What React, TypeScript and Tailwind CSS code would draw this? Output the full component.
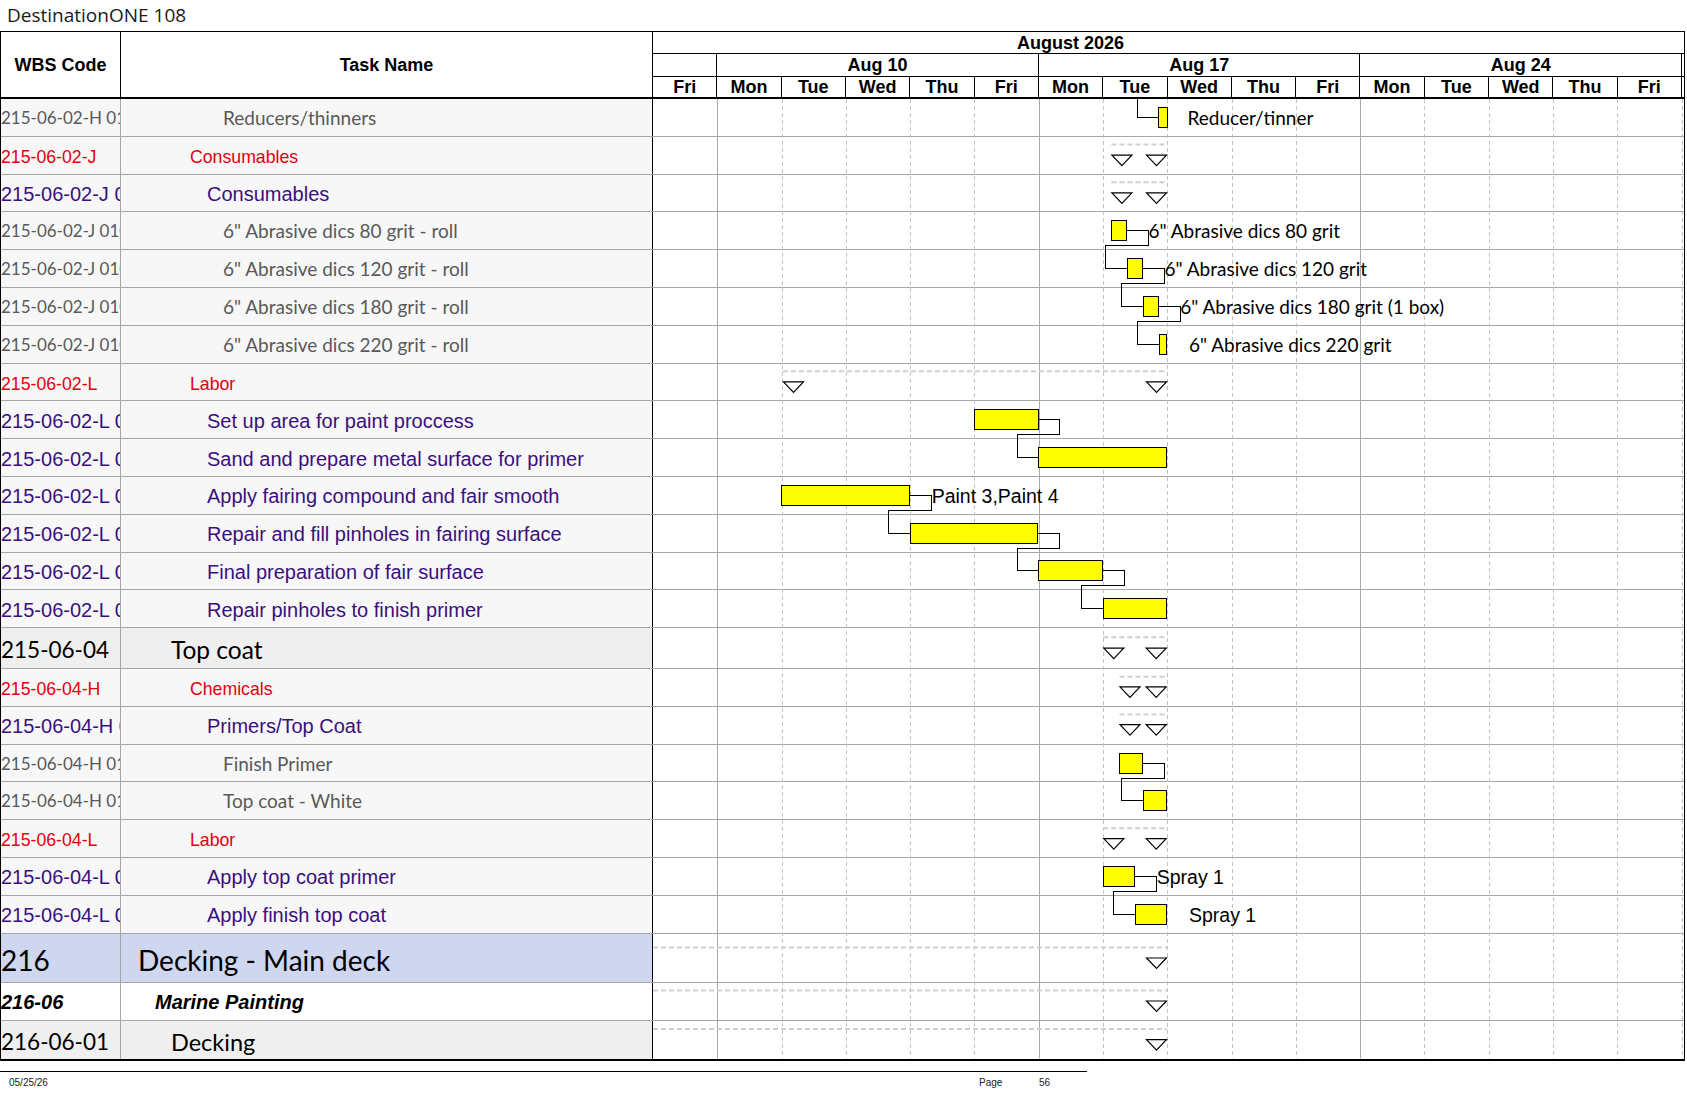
import React from 'react';

type Kind = 'grey' | 'red' | 'purple' | 'top' | 'main' | 'marine' | 'deck';

interface Row {
  wbs: string;
  name: string;
  kind: Kind;
}

const rows: Row[] = [
  { wbs: '215-06-02-H 0101', name: 'Reducers/thinners', kind: 'grey' },
  { wbs: '215-06-02-J', name: 'Consumables', kind: 'red' },
  { wbs: '215-06-02-J 01', name: 'Consumables', kind: 'purple' },
  { wbs: '215-06-02-J 0101', name: '6" Abrasive dics 80 grit - roll', kind: 'grey' },
  { wbs: '215-06-02-J 0102', name: '6" Abrasive dics 120 grit - roll', kind: 'grey' },
  { wbs: '215-06-02-J 0103', name: '6" Abrasive dics 180 grit - roll', kind: 'grey' },
  { wbs: '215-06-02-J 0104', name: '6" Abrasive dics 220 grit - roll', kind: 'grey' },
  { wbs: '215-06-02-L', name: 'Labor', kind: 'red' },
  { wbs: '215-06-02-L 01', name: 'Set up area for paint proccess', kind: 'purple' },
  { wbs: '215-06-02-L 02', name: 'Sand and prepare metal surface for primer', kind: 'purple' },
  { wbs: '215-06-02-L 03', name: 'Apply fairing compound and fair smooth', kind: 'purple' },
  { wbs: '215-06-02-L 04', name: 'Repair and fill pinholes in fairing surface', kind: 'purple' },
  { wbs: '215-06-02-L 05', name: 'Final preparation of fair surface', kind: 'purple' },
  { wbs: '215-06-02-L 06', name: 'Repair pinholes to finish primer', kind: 'purple' },
  { wbs: '215-06-04', name: 'Top coat', kind: 'top' },
  { wbs: '215-06-04-H', name: 'Chemicals', kind: 'red' },
  { wbs: '215-06-04-H 01', name: 'Primers/Top Coat', kind: 'purple' },
  { wbs: '215-06-04-H 0101', name: 'Finish Primer', kind: 'grey' },
  { wbs: '215-06-04-H 0102', name: 'Top coat - White', kind: 'grey' },
  { wbs: '215-06-04-L', name: 'Labor', kind: 'red' },
  { wbs: '215-06-04-L 01', name: 'Apply top coat primer', kind: 'purple' },
  { wbs: '215-06-04-L 02', name: 'Apply finish top coat', kind: 'purple' },
  { wbs: '216', name: 'Decking - Main deck', kind: 'main' },
  { wbs: '216-06', name: 'Marine Painting', kind: 'marine' },
  { wbs: '216-06-01', name: 'Decking', kind: 'deck' },
];

interface KindStyle {
  h: number;
  row: string;
  shift: string;
  bg: string;
  wtext: string;
  text: string;
  pad: string;
}

const kindStyle: Record<Kind, KindStyle> = {
  grey: {
    h: 37.8,
    row: 'h-[37.8px]',
    shift: 'pt-0',
    bg: 'bg-[#f7f7f7]',
    wtext: "font-['Lato',sans-serif] text-[17px] text-[#595959]",
    text: "font-['Lato',sans-serif] text-[19px] text-[#595959]",
    pad: 'pl-[102px]',
  },
  red: {
    h: 37.8,
    row: 'h-[37.8px]',
    shift: 'pt-[5px]',
    bg: 'bg-[#f7f7f7]',
    wtext: "font-['Liberation_Sans',Arial,sans-serif] text-[17.7px] text-[#e3000f]",
    text: "font-['Liberation_Sans',Arial,sans-serif] text-[17.7px] text-[#e3000f]",
    pad: 'pl-[69px]',
  },
  purple: {
    h: 37.8,
    row: 'h-[37.8px]',
    shift: 'pt-[2px]',
    bg: 'bg-[#f7f7f7]',
    wtext: "font-['Liberation_Sans',Arial,sans-serif] text-[20px] text-[#3b0f80]",
    text: "font-['Liberation_Sans',Arial,sans-serif] text-[20px] text-[#3b0f80]",
    pad: 'pl-[86px]',
  },
  top: {
    h: 40.9,
    row: 'h-[40.9px]',
    shift: 'pt-[4px]',
    bg: 'bg-[#efefef]',
    wtext: "font-['Lato',sans-serif] text-[22.5px] text-black",
    text: "font-['Lato',sans-serif] text-[24.5px] text-black",
    pad: 'pl-[50px]',
  },
  main: {
    h: 49.5,
    row: 'h-[49.5px]',
    shift: 'pt-[4px]',
    bg: 'bg-[#cfd6ef]',
    wtext: "font-['Lato',sans-serif] text-[28px] text-black",
    text: "font-['Lato',sans-serif] text-[28px] text-black",
    pad: 'pl-[17px]',
  },
  marine: {
    h: 37.5,
    row: 'h-[37.5px]',
    shift: 'pt-[2px]',
    bg: 'bg-white',
    wtext: "font-['Liberation_Sans',Arial,sans-serif] text-[20px] font-bold italic text-black",
    text: "font-['Liberation_Sans',Arial,sans-serif] text-[20px] font-bold italic text-black",
    pad: 'pl-[34px]',
  },
  deck: {
    h: 38,
    row: 'h-[38px]',
    shift: 'pt-[6px]',
    bg: 'bg-[#efefef]',
    wtext: "font-['Lato',sans-serif] text-[22.5px] text-black",
    text: "font-['Lato',sans-serif] text-[23.5px] text-black",
    pad: 'pl-[50px]',
  },
};

const days = ['Fri', 'Mon', 'Tue', 'Wed', 'Thu', 'Fri', 'Mon', 'Tue', 'Wed', 'Thu', 'Fri', 'Mon', 'Tue', 'Wed', 'Thu', 'Fri'];

// row tops in page coordinates, used by the chart overlay
const tops: number[] = [];
{
  let y = 99;
  rows.forEach((r) => {
    tops.push(y);
    y += kindStyle[r.kind].h;
  });
  tops.push(y);
}

const DAY = 64.29;
const X0 = 653;

const bars: [number, number, number][] = [
  [1158.8, 1167.5, 0],
  [1111.7, 1126.3, 3],
  [1127.3, 1142.3, 4],
  [1143.3, 1158.7, 5],
  [1159.3, 1166.7, 6],
  [974, 1038, 8],
  [1038, 1166.7, 9],
  [781.3, 909.3, 10],
  [910.7, 1037.7, 11],
  [1038, 1102.3, 12],
  [1103.3, 1166.7, 13],
  [1119.3, 1142.7, 17],
  [1143.3, 1166.7, 18],
  [1103.3, 1134.3, 20],
  [1135.3, 1166.7, 21],
];

// from, out, back, to, row of predecessor
const links: [number, number, number, number, number][] = [
  [1126.3, 1148.3, 1105, 1127.3, 3],
  [1142.3, 1164.3, 1121, 1143.3, 4],
  [1158.7, 1180, 1137.3, 1159.3, 5],
  [1038, 1059.3, 1017.3, 1038, 8],
  [909.3, 931.7, 888.3, 910.7, 10],
  [1037.7, 1059.3, 1017.3, 1038, 11],
  [1102.3, 1124.3, 1081.7, 1103.3, 12],
  [1142.7, 1164.7, 1121.3, 1143.3, 17],
  [1134.3, 1156.7, 1113.3, 1135.3, 20],
];

// x0, x1, row, dash offset, triangle offset, left triangle
const summaries: [number, number, number, number, number, boolean][] = [
  [1111.4, 1167, 1, 7.6, 18.3, true],
  [1111.4, 1167, 2, 7.6, 18.3, true],
  [783, 1167, 7, 7.6, 18.3, true],
  [1103.3, 1166.7, 14, 9, 20, true],
  [1119.5, 1166.7, 15, 7.6, 17.8, true],
  [1119.5, 1166.7, 16, 7.6, 17.8, true],
  [1103.3, 1166.7, 19, 8, 18.3, true],
  [653, 1167, 22, 13.7, 24.3, false],
  [653, 1167, 23, 7.4, 17.8, false],
  [653, 1167, 24, 8.3, 19, false],
];

const labels: [string, number, number, 'cal' | 'arial'][] = [
  ['Reducer/tinner', 1187.5, 0, 'cal'],
  ['6" Abrasive dics 80 grit', 1148.5, 3, 'cal'],
  ['6" Abrasive dics 120 grit', 1164.5, 4, 'cal'],
  ['6" Abrasive dics 180 grit (1 box)', 1180.2, 5, 'cal'],
  ['6" Abrasive dics 220 grit', 1189, 6, 'cal'],
  ['Paint 3,Paint 4', 931.7, 10, 'arial'],
  ['Spray 1', 1156.7, 20, 'arial'],
  ['Spray 1', 1189, 21, 'arial'],
];

const mid = (row: number) => tops[row] + 18.3;

function GanttOverlay() {
  const bottom = tops[tops.length - 1];
  return (
    <svg className="absolute left-[652px] top-0 pointer-events-none" width={1031} height={bottom - 99}>
      <g transform="translate(-653,-99)">
        {Array.from({ length: 16 }, (_, i) => {
          const k = i + 1;
          const x = Math.round(X0 + k * DAY) + 0.5;
          const solid = k === 1 || k === 6 || k === 11;
          return (
            <line
              key={k}
              x1={x}
              x2={x}
              y1={99}
              y2={bottom}
              stroke={solid ? '#a9a9a9' : '#c2c2c2'}
              strokeDasharray={solid ? undefined : '4 3'}
              strokeWidth={1}
            />
          );
        })}

        {summaries.map(([a, b, r, d, t, left], i) => {
          const yd = tops[r] + d;
          const yt = tops[r] + t;
          return (
            <g key={i}>
              <line x1={a} x2={b} y1={yd} y2={yd} stroke="#cfcfcf" strokeWidth={2} strokeDasharray="5 3" />
              {left && (
                <polygon
                  points={`${a + 0.5},${yt} ${a + 20.5},${yt} ${a + 10.5},${yt + 10.5}`}
                  fill="white"
                  stroke="black"
                  strokeWidth={1.2}
                />
              )}
              <polygon
                points={`${b - 20.5},${yt} ${b - 0.5},${yt} ${b - 10.5},${yt + 10.5}`}
                fill="white"
                stroke="black"
                strokeWidth={1.2}
              />
            </g>
          );
        })}

        {/* incoming link from the previous page */}
        <polyline
          points={`1137.5,99 1137.5,${mid(0)} 1158.8,${mid(0)}`}
          fill="none"
          stroke="black"
          strokeWidth={1}
          shapeRendering="crispEdges"
        />

        {links.map(([from, out, back, to, r], i) => {
          const y1 = mid(r);
          const yb = tops[r + 1] - 4.5;
          const y2 = mid(r + 1);
          return (
            <polyline
              key={i}
              points={`${from},${y1} ${out},${y1} ${out},${yb} ${back},${yb} ${back},${y2} ${to},${y2}`}
              fill="none"
              stroke="black"
              strokeWidth={1}
              shapeRendering="crispEdges"
            />
          );
        })}

        {bars.map(([a, b, r], i) => (
          <rect
            key={i}
            x={a}
            y={tops[r] + 8.3}
            width={b - a}
            height={20}
            fill="#ffff00"
            stroke="black"
            strokeWidth={1}
            shapeRendering="crispEdges"
          />
        ))}

        {labels.map(([txt, x, r, f], i) => (
          <text
            key={i}
            x={x}
            y={mid(r) + 7.5}
            fontFamily={f === 'cal' ? 'Lato, sans-serif' : "'Liberation Sans', Arial, sans-serif"}
            fontSize={f === 'cal' ? 19 : 19.5}
            fill="black"
          >
            {txt}
          </text>
        ))}
      </g>
    </svg>
  );
}

function Header() {
  return (
    <div className="flex h-[67px] font-['Liberation_Sans',Arial,sans-serif] text-[18px] font-bold leading-none text-black">
      <div className="w-[120px] border-r border-b-2 border-black flex items-center justify-center">WBS Code</div>
      <div className="w-[532px] border-r border-b-2 border-black flex items-center justify-center">Task Name</div>
      <div className="w-[1031px] flex flex-col">
        <div className="h-[22px] border-b border-black flex items-center pl-[364px]">August 2026</div>
        <div className="h-[23px] border-b border-black">
          <div className="grid grid-cols-16 w-[1029px] h-full">
            <div className="border-r border-black" />
            <div className="col-span-5 border-r border-black flex items-center justify-center">Aug 10</div>
            <div className="col-span-5 border-r border-black flex items-center justify-center">Aug 17</div>
            <div className="col-span-5 border-r border-black flex items-center justify-center">Aug 24</div>
          </div>
        </div>
        <div className="h-[22px] border-b-2 border-black">
          <div className="grid grid-cols-16 w-[1029px] h-full">
            {days.map((d, i) => (
              <div key={i} className="border-r border-black flex items-center justify-center">
                {d}
              </div>
            ))}
          </div>
        </div>
      </div>
    </div>
  );
}

export default function App() {
  return (
    <div className="w-[1687px] h-[1097px] bg-white overflow-hidden">
      <div className="h-[31px] flex items-center pl-[7px] font-['Open_Sans',sans-serif] text-[19px] text-[#1a1a1a]">
        DestinationONE 108
      </div>

      <div className="w-[1685px] border-t border-l border-r border-b-2 border-black">
        <Header />
        <div className="relative">
          {rows.map((r, i) => {
            const s = kindStyle[r.kind];
            const last = i === rows.length - 1;
            return (
              <div key={i} className={`flex ${s.row} ${last ? '' : 'border-b border-[#a6a6a6]'}`}>
                <div
                  className={`w-[120px] shrink-0 border-r border-[#a6a6a6] ${s.bg} ${s.wtext} ${s.shift} flex items-center overflow-hidden whitespace-nowrap leading-none`}
                >
                  {r.wbs}
                </div>
                <div
                  className={`w-[532px] shrink-0 border-r border-black ${s.bg} ${s.text} ${s.pad} ${s.shift} flex items-center overflow-hidden whitespace-nowrap leading-none`}
                >
                  {r.name}
                </div>
                <div className="w-[1031px] shrink-0 bg-white" />
              </div>
            );
          })}
          <GanttOverlay />
        </div>
      </div>

      {/* page footer */}
      <div className="mt-[10px] w-[1087px] border-t border-black" />
      <div className="flex h-[22px] items-center font-['Liberation_Sans',Arial,sans-serif] text-[10px] text-[#222]">
        <span className="w-[979px] pl-[9px]">05/25/26</span>
        <span className="w-[60px]">Page</span>
        <span>56</span>
      </div>
    </div>
  );
}
